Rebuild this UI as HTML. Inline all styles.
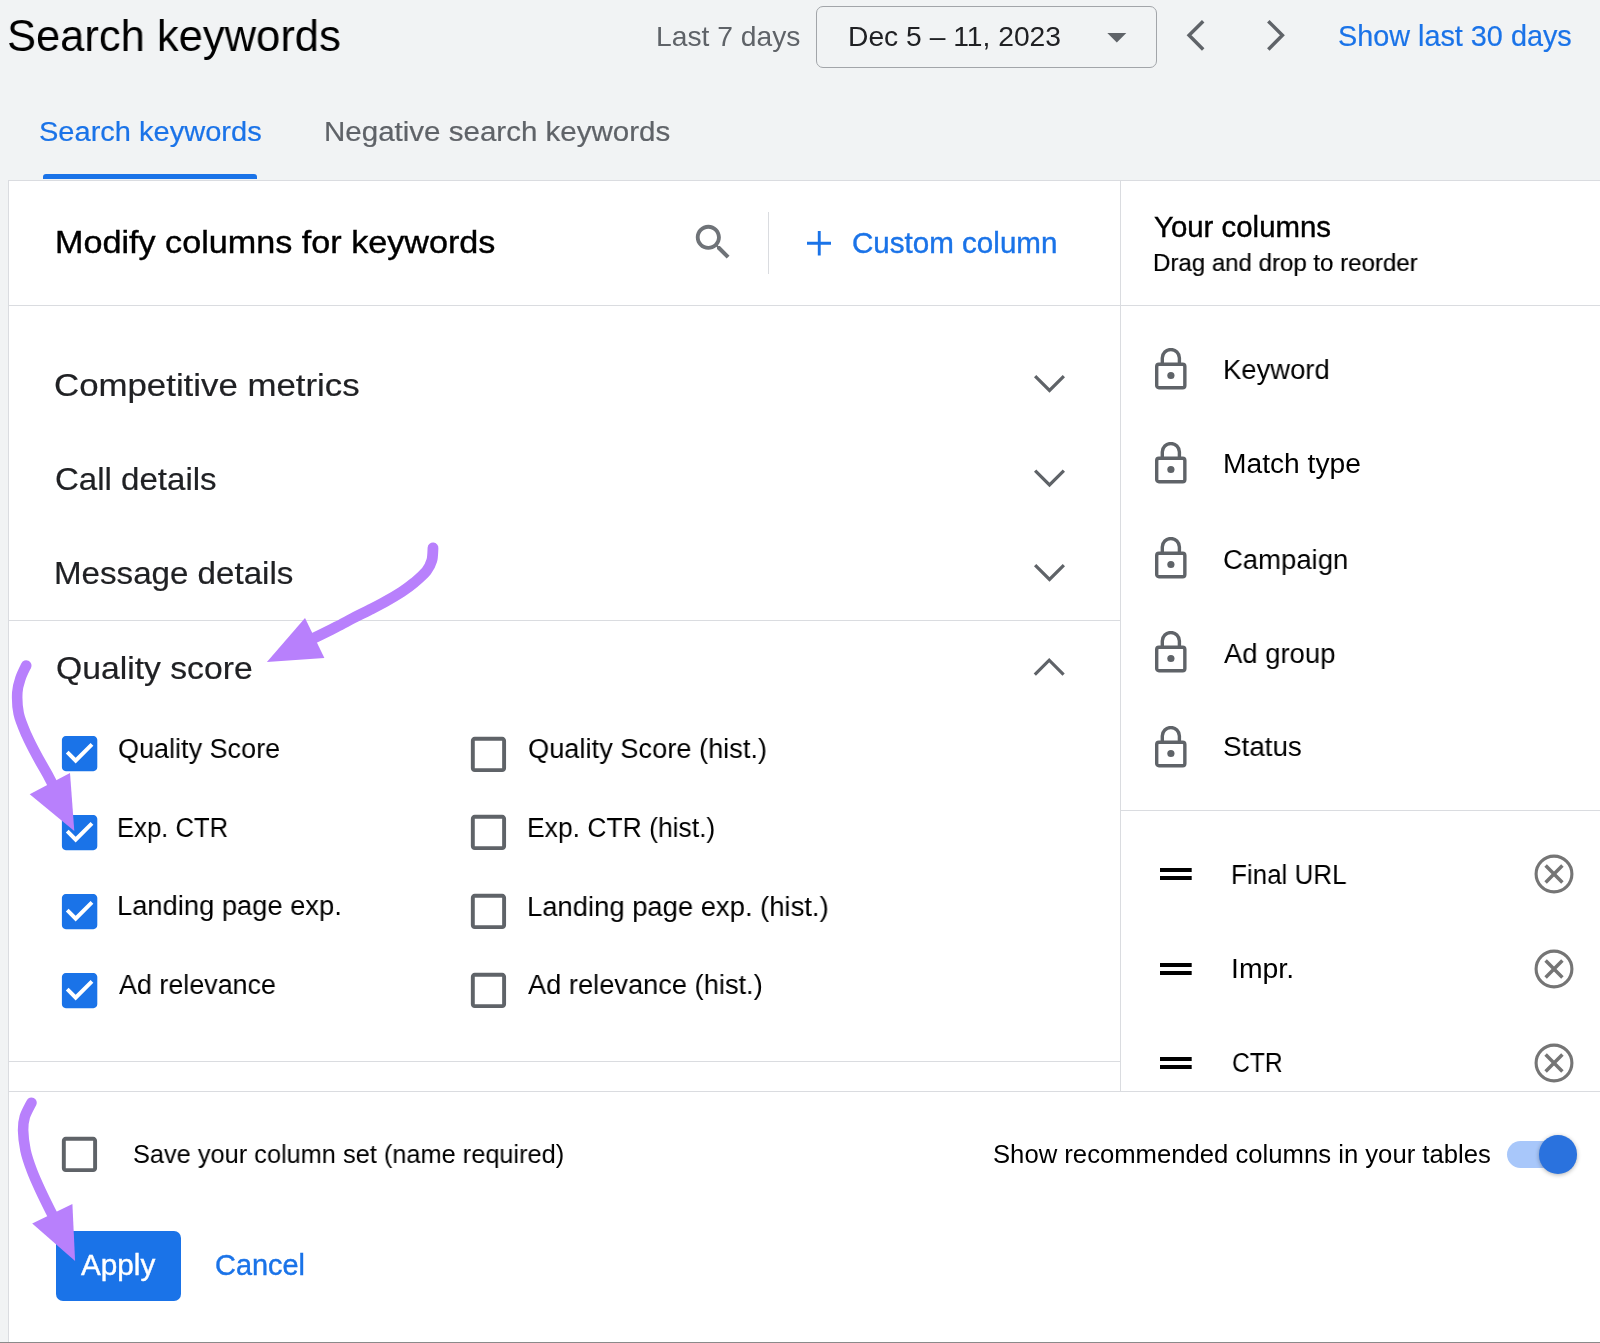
<!DOCTYPE html>
<html><head><meta charset="utf-8"><title>Search keywords</title>
<style>
html,body{margin:0;padding:0}
body{width:1600px;height:1343px;background:#f1f3f4;position:relative;overflow:hidden;font-family:"Liberation Sans",sans-serif}
.t{position:absolute;line-height:0;white-space:nowrap;transform-origin:0 0;will-change:transform}
.ic{position:absolute;display:block}
.ln{position:absolute;background:#dadce0}
</style></head><body>
<div style="position:absolute;left:8px;top:180px;width:1592px;height:1162px;background:#fff;border-left:1px solid #dadce0;border-top:1px solid #dadce0;box-sizing:border-box"></div>
<div style="position:absolute;left:42.5px;top:173.8px;width:214.5px;height:5.6px;background:#1a73e8;border-radius:3px 3px 0 0"></div>
<div class="ln" style="left:8px;top:305px;width:1592px;height:1.2px"></div>
<div class="ln" style="left:1120px;top:180px;width:1.2px;height:911px"></div>
<div class="ln" style="left:768px;top:211.5px;width:1.2px;height:62.5px"></div>
<div class="ln" style="left:8px;top:619.5px;width:1112px;height:1.2px"></div>
<div class="ln" style="left:1120px;top:809.8px;width:480px;height:1.2px"></div>
<div class="ln" style="left:8px;top:1061px;width:1112px;height:1.2px"></div>
<div class="ln" style="left:8px;top:1090.8px;width:1592px;height:1.2px"></div>
<div style="position:absolute;left:0;top:1342px;width:1600px;height:1px;background:#8a8a8a"></div>
<div style="position:absolute;left:816px;top:6px;width:340.6px;height:62px;border:1.6px solid #a2a5a9;border-radius:7px;box-sizing:border-box"></div>
<svg class="ic" style="left:1093.7px;top:14px" width="45.6" height="45.6" viewBox="0 0 24 24"><path fill="#5f6368" d="M7 10l5 5 5-5z"/></svg>
<svg class="ic" style="left:1180px;top:15px" width="30" height="42" viewBox="0 0 30 42"><path d="M23.2 6.2L9.1 20.3L23.2 34.4" fill="none" stroke="#5f6368" stroke-width="3.5"/></svg>
<svg class="ic" style="left:1260px;top:15px" width="30" height="42" viewBox="0 0 30 42"><path d="M8.3 6.2L22.4 20.3L8.3 34.4" fill="none" stroke="#5f6368" stroke-width="3.5"/></svg>
<svg class="ic" style="left:690px;top:219.2px" width="46.3" height="46.3" viewBox="0 0 24 24"><path fill="#6f7378" d="M15.5 14h-.79l-.28-.27C15.41 12.59 16 11.11 16 9.5 16 5.91 13.09 3 9.5 3S3 5.91 3 9.5 5.91 16 9.5 16c1.61 0 3.09-.59 4.23-1.57l.27.28v.79l5 4.99L20.49 19l-4.99-5zm-6 0C7.01 14 5 11.99 5 9.5S7.01 5 9.5 5 14 7.01 14 9.5 11.99 14 9.5 14z"/></svg>
<svg class="ic" style="left:806.5px;top:231px" width="24.5" height="24.5" viewBox="0 0 24.5 24.5"><path d="M12.25 0V24.5M0 12.25H24.5" stroke="#1a73e8" stroke-width="2.9"/></svg>
<svg class="ic" style="left:55.50px;top:730.10px" width="47.20" height="47.20" viewBox="0 0 24 24"><path fill="#1a73e8" d="M19 3H5c-1.11 0-2 .9-2 2v14c0 1.1.89 2 2 2h14c1.11 0 2-.9 2-2V5c0-1.1-.89-2-2-2zm-9 14l-5-5 1.41-1.41L10 14.17l7.59-7.59L19 8l-9 9z"/></svg>
<svg class="ic" style="left:55.50px;top:808.90px" width="47.20" height="47.20" viewBox="0 0 24 24"><path fill="#1a73e8" d="M19 3H5c-1.11 0-2 .9-2 2v14c0 1.1.89 2 2 2h14c1.11 0 2-.9 2-2V5c0-1.1-.89-2-2-2zm-9 14l-5-5 1.41-1.41L10 14.17l7.59-7.59L19 8l-9 9z"/></svg>
<svg class="ic" style="left:55.50px;top:887.70px" width="47.20" height="47.20" viewBox="0 0 24 24"><path fill="#1a73e8" d="M19 3H5c-1.11 0-2 .9-2 2v14c0 1.1.89 2 2 2h14c1.11 0 2-.9 2-2V5c0-1.1-.89-2-2-2zm-9 14l-5-5 1.41-1.41L10 14.17l7.59-7.59L19 8l-9 9z"/></svg>
<svg class="ic" style="left:55.50px;top:966.50px" width="47.20" height="47.20" viewBox="0 0 24 24"><path fill="#1a73e8" d="M19 3H5c-1.11 0-2 .9-2 2v14c0 1.1.89 2 2 2h14c1.11 0 2-.9 2-2V5c0-1.1-.89-2-2-2zm-9 14l-5-5 1.41-1.41L10 14.17l7.59-7.59L19 8l-9 9z"/></svg>
<svg class="ic" style="left:464.63px;top:730.63px" width="46.93" height="46.93" viewBox="0 0 24 24"><path fill="#5f6368" d="M19 5v14H5V5h14m0-2H5c-1.1 0-2 .9-2 2v14c0 1.1.9 2 2 2h14c1.1 0 2-.9 2-2V5c0-1.1-.9-2-2-2z"/></svg>
<svg class="ic" style="left:464.63px;top:809.43px" width="46.93" height="46.93" viewBox="0 0 24 24"><path fill="#5f6368" d="M19 5v14H5V5h14m0-2H5c-1.1 0-2 .9-2 2v14c0 1.1.9 2 2 2h14c1.1 0 2-.9 2-2V5c0-1.1-.9-2-2-2z"/></svg>
<svg class="ic" style="left:464.63px;top:888.23px" width="46.93" height="46.93" viewBox="0 0 24 24"><path fill="#5f6368" d="M19 5v14H5V5h14m0-2H5c-1.1 0-2 .9-2 2v14c0 1.1.9 2 2 2h14c1.1 0 2-.9 2-2V5c0-1.1-.9-2-2-2z"/></svg>
<svg class="ic" style="left:464.63px;top:967.03px" width="46.93" height="46.93" viewBox="0 0 24 24"><path fill="#5f6368" d="M19 5v14H5V5h14m0-2H5c-1.1 0-2 .9-2 2v14c0 1.1.9 2 2 2h14c1.1 0 2-.9 2-2V5c0-1.1-.9-2-2-2z"/></svg>
<svg class="ic" style="left:55.53px;top:1130.73px" width="46.93" height="46.93" viewBox="0 0 24 24"><path fill="#5f6368" d="M19 5v14H5V5h14m0-2H5c-1.1 0-2 .9-2 2v14c0 1.1.9 2 2 2h14c1.1 0 2-.9 2-2V5c0-1.1-.9-2-2-2z"/></svg>
<svg class="ic" style="left:1154.70px;top:347.50px" width="32" height="42" viewBox="0 0 32 42"><path d="M7.3 15.5V10.1A8.55 8.55 0 0 1 24.4 10.1V15.5" fill="none" stroke="#5f6368" stroke-width="3.4"/><rect x="1.7" y="16.2" width="28.15" height="23.6" rx="2.2" fill="none" stroke="#5f6368" stroke-width="3.4"/><circle cx="15.9" cy="27.5" r="3.6" fill="#5f6368"/></svg>
<svg class="ic" style="left:1154.70px;top:442.00px" width="32" height="42" viewBox="0 0 32 42"><path d="M7.3 15.5V10.1A8.55 8.55 0 0 1 24.4 10.1V15.5" fill="none" stroke="#5f6368" stroke-width="3.4"/><rect x="1.7" y="16.2" width="28.15" height="23.6" rx="2.2" fill="none" stroke="#5f6368" stroke-width="3.4"/><circle cx="15.9" cy="27.5" r="3.6" fill="#5f6368"/></svg>
<svg class="ic" style="left:1154.70px;top:536.50px" width="32" height="42" viewBox="0 0 32 42"><path d="M7.3 15.5V10.1A8.55 8.55 0 0 1 24.4 10.1V15.5" fill="none" stroke="#5f6368" stroke-width="3.4"/><rect x="1.7" y="16.2" width="28.15" height="23.6" rx="2.2" fill="none" stroke="#5f6368" stroke-width="3.4"/><circle cx="15.9" cy="27.5" r="3.6" fill="#5f6368"/></svg>
<svg class="ic" style="left:1154.70px;top:631.00px" width="32" height="42" viewBox="0 0 32 42"><path d="M7.3 15.5V10.1A8.55 8.55 0 0 1 24.4 10.1V15.5" fill="none" stroke="#5f6368" stroke-width="3.4"/><rect x="1.7" y="16.2" width="28.15" height="23.6" rx="2.2" fill="none" stroke="#5f6368" stroke-width="3.4"/><circle cx="15.9" cy="27.5" r="3.6" fill="#5f6368"/></svg>
<svg class="ic" style="left:1154.70px;top:725.50px" width="32" height="42" viewBox="0 0 32 42"><path d="M7.3 15.5V10.1A8.55 8.55 0 0 1 24.4 10.1V15.5" fill="none" stroke="#5f6368" stroke-width="3.4"/><rect x="1.7" y="16.2" width="28.15" height="23.6" rx="2.2" fill="none" stroke="#5f6368" stroke-width="3.4"/><circle cx="15.9" cy="27.5" r="3.6" fill="#5f6368"/></svg>
<svg class="ic" style="left:1160.3px;top:868.10px" width="31.7" height="12" viewBox="0 0 31.7 12"><rect x="0" y="0" width="31.7" height="4" fill="#000"/><rect x="0" y="8" width="31.7" height="4" fill="#000"/></svg>
<svg class="ic" style="left:1534.05px;top:854.10px" width="40" height="40" viewBox="0 0 40 40"><circle cx="20" cy="20" r="17.9" fill="none" stroke="#757575" stroke-width="3.1"/><path d="M11.6 11.6L28.4 28.4M28.4 11.6L11.6 28.4" stroke="#757575" stroke-width="3.5" stroke-linecap="butt"/></svg>
<svg class="ic" style="left:1160.3px;top:962.50px" width="31.7" height="12" viewBox="0 0 31.7 12"><rect x="0" y="0" width="31.7" height="4" fill="#000"/><rect x="0" y="8" width="31.7" height="4" fill="#000"/></svg>
<svg class="ic" style="left:1534.05px;top:948.50px" width="40" height="40" viewBox="0 0 40 40"><circle cx="20" cy="20" r="17.9" fill="none" stroke="#757575" stroke-width="3.1"/><path d="M11.6 11.6L28.4 28.4M28.4 11.6L11.6 28.4" stroke="#757575" stroke-width="3.5" stroke-linecap="butt"/></svg>
<svg class="ic" style="left:1160.3px;top:1056.80px" width="31.7" height="12" viewBox="0 0 31.7 12"><rect x="0" y="0" width="31.7" height="4" fill="#000"/><rect x="0" y="8" width="31.7" height="4" fill="#000"/></svg>
<svg class="ic" style="left:1534.05px;top:1042.80px" width="40" height="40" viewBox="0 0 40 40"><circle cx="20" cy="20" r="17.9" fill="none" stroke="#757575" stroke-width="3.1"/><path d="M11.6 11.6L28.4 28.4M28.4 11.6L11.6 28.4" stroke="#757575" stroke-width="3.5" stroke-linecap="butt"/></svg>
<svg class="ic" style="left:0;top:0" width="1600" height="1343" viewBox="0 0 1600 1343"><path d="M1035.13 376.13 L1049.5 390.50 L1063.87 376.13" fill="none" stroke="#5f6368" stroke-width="3.2"/></svg>
<svg class="ic" style="left:0;top:0" width="1600" height="1343" viewBox="0 0 1600 1343"><path d="M1035.13 470.63 L1049.5 485.00 L1063.87 470.63" fill="none" stroke="#5f6368" stroke-width="3.2"/></svg>
<svg class="ic" style="left:0;top:0" width="1600" height="1343" viewBox="0 0 1600 1343"><path d="M1035.13 565.13 L1049.5 579.50 L1063.87 565.13" fill="none" stroke="#5f6368" stroke-width="3.2"/></svg>
<svg class="ic" style="left:0;top:0" width="1600" height="1343" viewBox="0 0 1600 1343"><path d="M1034.8 674.53 L1049.2 660.16 L1063.6 674.53" fill="none" stroke="#5f6368" stroke-width="3.2"/></svg>
<div style="position:absolute;left:1507px;top:1140.75px;width:54px;height:27.25px;border-radius:14px;background:#a8c7fa"></div>
<div style="position:absolute;left:1538.5px;top:1135px;width:38.5px;height:38.5px;border-radius:50%;background:#2a72de;box-shadow:0 1px 4px rgba(0,0,0,0.3)"></div>
<div style="position:absolute;left:55.7px;top:1230.7px;width:125.5px;height:70.3px;border-radius:7px;background:#1a73e8"></div>
<div class="t" id="title" style="left:6.54px;top:36.08px;font-size:45.0px;transform:scaleX(0.9671);color:#000000">Search keywords</div>
<div class="t" id="last7" style="left:655.70px;top:36.56px;font-size:28.1px;transform:scaleX(1.0048);color:#5f6368">Last 7 days</div>
<div class="t" id="date" style="left:848.00px;top:36.81px;font-size:28.1px;transform:scaleX(1.0053);color:#202124">Dec 5 – 11, 2023</div>
<div class="t" id="show30" style="left:1337.70px;top:36.06px;font-size:28.8px;transform:scaleX(0.9981);-webkit-text-stroke:0.2px #1a73e8;color:#1a73e8">Show last 30 days</div>
<div class="t" id="tab1" style="left:38.70px;top:132.25px;font-size:26.8px;transform:scaleX(1.0833);-webkit-text-stroke:0.2px #1a73e8;color:#1a73e8">Search keywords</div>
<div class="t" id="tab2" style="left:323.70px;top:132.25px;font-size:26.8px;transform:scaleX(1.1017);-webkit-text-stroke:0.2px #5f6368;color:#5f6368">Negative search keywords</div>
<div class="t" id="modify" style="left:54.70px;top:242.29px;font-size:31.9px;transform:scaleX(1.0711);-webkit-text-stroke:0.4px #000000;color:#000000">Modify columns for keywords</div>
<div class="t" id="custom" style="left:852.00px;top:242.66px;font-size:28.8px;transform:scaleX(1.0268);-webkit-text-stroke:0.4px #1a73e8;color:#1a73e8">Custom column</div>
<div class="t" id="yourcols" style="left:1153.78px;top:226.96px;font-size:28.8px;transform:scaleX(1.0209);-webkit-text-stroke:0.4px #000000;color:#000000">Your columns</div>
<div class="t" id="drag" style="left:1152.57px;top:262.65px;font-size:24.2px;transform:scaleX(0.9941);-webkit-text-stroke:0.2px #000000;color:#000000">Drag and drop to reorder</div>
<div class="t" id="comp" style="left:54.32px;top:384.99px;font-size:31.9px;transform:scaleX(1.0915);-webkit-text-stroke:0.2px #202124;color:#202124">Competitive metrics</div>
<div class="t" id="call" style="left:54.59px;top:478.99px;font-size:31.9px;transform:scaleX(1.0360);-webkit-text-stroke:0.2px #202124;color:#202124">Call details</div>
<div class="t" id="msg" style="left:53.65px;top:573.49px;font-size:31.9px;transform:scaleX(1.0388);-webkit-text-stroke:0.2px #202124;color:#202124">Message details</div>
<div class="t" id="qs" style="left:55.50px;top:667.79px;font-size:31.9px;transform:scaleX(1.0569);-webkit-text-stroke:0.2px #202124;color:#202124">Quality score</div>
<div class="t" id="c1" style="left:118.00px;top:747.77px;font-size:28.2px;transform:scaleX(0.9581);color:#000000">Quality Score</div>
<div class="t" id="c2" style="left:117.36px;top:827.17px;font-size:28.2px;transform:scaleX(0.9102);color:#000000">Exp. CTR</div>
<div class="t" id="c3" style="left:117.00px;top:905.27px;font-size:28.2px;transform:scaleX(0.9689);color:#000000">Landing page exp.</div>
<div class="t" id="c4" style="left:119.00px;top:984.47px;font-size:28.2px;transform:scaleX(0.9540);color:#000000">Ad relevance</div>
<div class="t" id="h1" style="left:527.65px;top:748.27px;font-size:28.2px;transform:scaleX(0.9660);color:#000000">Quality Score (hist.)</div>
<div class="t" id="h2" style="left:527.17px;top:827.27px;font-size:28.2px;transform:scaleX(0.9392);color:#000000">Exp. CTR (hist.)</div>
<div class="t" id="h3" style="left:526.65px;top:905.77px;font-size:28.2px;transform:scaleX(0.9721);color:#000000">Landing page exp. (hist.)</div>
<div class="t" id="h4" style="left:528.46px;top:984.37px;font-size:28.2px;transform:scaleX(0.9667);color:#000000">Ad relevance (hist.)</div>
<div class="t" id="k1" style="left:1222.70px;top:369.02px;font-size:28.2px;transform:scaleX(0.9732);color:#000000">Keyword</div>
<div class="t" id="k2" style="left:1222.70px;top:463.27px;font-size:28.2px;transform:scaleX(0.9969);color:#000000">Match type</div>
<div class="t" id="k3" style="left:1223.46px;top:558.52px;font-size:28.2px;transform:scaleX(0.9749);color:#000000">Campaign</div>
<div class="t" id="k4" style="left:1223.82px;top:652.57px;font-size:28.2px;transform:scaleX(0.9743);color:#000000">Ad group</div>
<div class="t" id="k5" style="left:1222.74px;top:746.47px;font-size:28.2px;transform:scaleX(0.9864);color:#000000">Status</div>
<div class="t" id="f1" style="left:1231.32px;top:873.77px;font-size:28.2px;transform:scaleX(0.9219);color:#000000">Final URL</div>
<div class="t" id="f2" style="left:1230.61px;top:968.47px;font-size:28.2px;transform:scaleX(1.0058);color:#000000">Impr.</div>
<div class="t" id="f3" style="left:1232.14px;top:1062.27px;font-size:28.2px;transform:scaleX(0.8761);color:#000000">CTR</div>
<div class="t" id="save" style="left:133.26px;top:1154.17px;font-size:25.6px;transform:scaleX(0.9906);color:#000000">Save your column set (name required)</div>
<div class="t" id="rec" style="left:992.72px;top:1154.37px;font-size:25.6px;transform:scaleX(1.0027);color:#000000">Show recommended columns in your tables</div>
<div class="t" id="apply" style="left:81.20px;top:1265.46px;font-size:28.8px;transform:scaleX(1.0306);-webkit-text-stroke:0.4px #ffffff;color:#ffffff">Apply</div>
<div class="t" id="cancel" style="left:215.00px;top:1265.46px;font-size:28.8px;transform:scaleX(1.0043);-webkit-text-stroke:0.4px #1a73e8;color:#1a73e8">Cancel</div>
<svg class="ic" style="left:0;top:0" width="1600" height="1343" viewBox="0 0 1600 1343">
<g fill="none" stroke="#b880fc" stroke-linecap="round" stroke-linejoin="round">
<path stroke-width="10.8" d="M433.0 548.0 C432.8 550.1 432.9 556.8 431.8 560.6 C430.7 564.4 429.4 567.3 426.5 571.0 C423.6 574.7 418.3 579.2 414.2 582.7 C410.1 586.2 406.7 588.6 401.9 591.7 C397.1 594.8 391.0 598.4 385.5 601.5 C380.0 604.6 374.6 607.3 369.1 610.1 C363.7 612.9 358.2 615.5 352.8 618.3 C347.4 621.1 341.9 624.1 336.4 626.9 C330.9 629.7 326.1 632.1 320.0 635.1 C313.9 638.1 303.3 643.4 300.0 645.0"/>
<path stroke-width="10.6" d="M26.2 665.6 C25.2 667.7 22.0 673.8 20.5 678.3 C19.0 682.8 17.6 686.6 17.3 692.5 C17.0 698.4 17.2 706.6 18.7 713.7 C20.2 720.8 23.4 727.8 26.5 734.9 C29.6 742.0 33.3 749.0 37.1 756.1 C40.9 763.2 45.6 770.9 49.1 777.4 C52.6 783.9 56.5 792.1 58.0 795.0"/>
<path stroke-width="10.6" d="M31.5 1102.7 C30.4 1105.0 26.2 1112.2 24.8 1116.8 C23.4 1121.4 23.0 1124.6 23.1 1130.2 C23.2 1135.8 24.1 1143.6 25.5 1150.3 C26.9 1157.0 29.3 1163.7 31.8 1170.4 C34.3 1177.1 37.4 1183.8 40.5 1190.5 C43.6 1197.2 47.4 1204.8 50.3 1210.6 C53.2 1216.3 56.7 1222.6 58.0 1225.0"/>
</g>
<g fill="#b880fc">
<path d="M305.0 618.1 L324.4 658.1 L266.9 661.9Z"/>
<path d="M29.7 794.3 L70.0 773.1 L74.3 831.1Z"/>
<path d="M32.2 1223.4 L72.4 1204.0 L75.1 1261.0Z"/>
</g>
</svg>
</body></html>
